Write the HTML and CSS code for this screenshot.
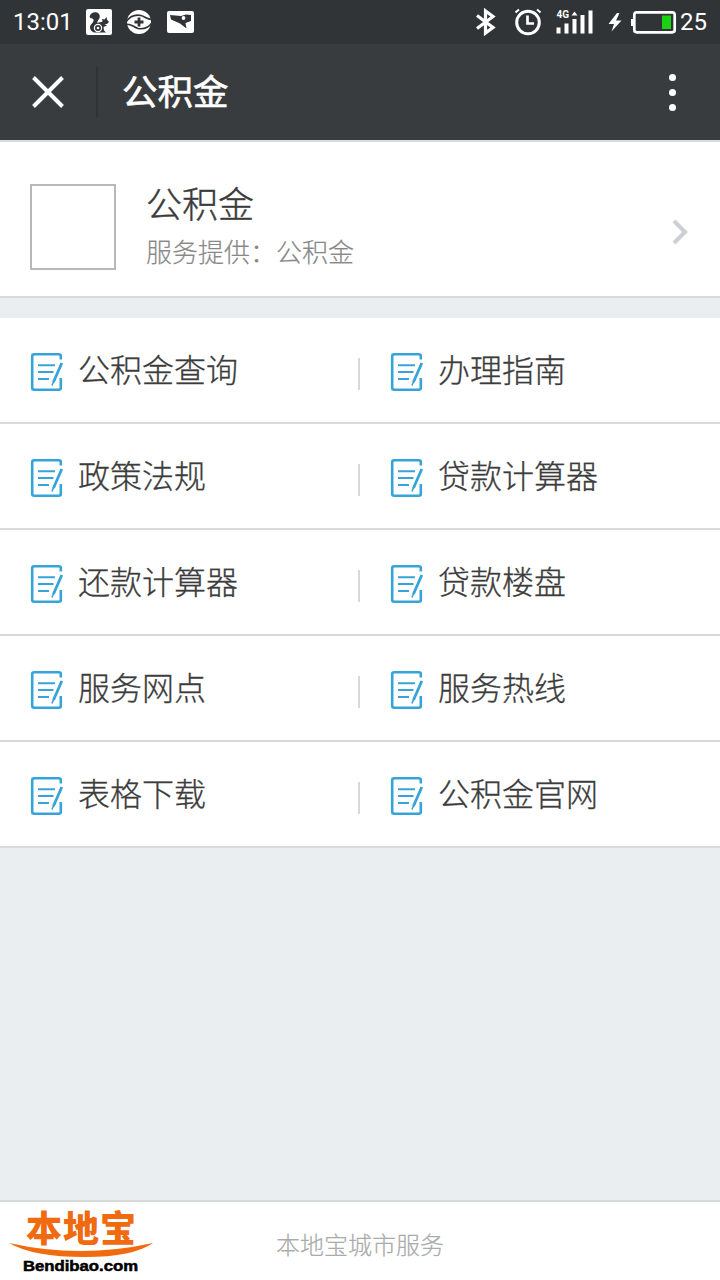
FILE: index.html
```html
<!DOCTYPE html>
<html lang="zh-CN">

<head>
    <meta charset="UTF-8">
    <meta name="viewport" content="width=device-width, initial-scale=1.0">
    <title>公积金</title>
    <link rel="stylesheet" href="styles.css">
</head>

<body>
    <!-- shared icon for the service list -->
    <svg class="sprite" width="0" height="0">
        <symbol id="icon-form" viewBox="0 0 34 40">
            <path d="M30.8 7.5V4.2Q30.8 2.2 28.8 2.2H4.2Q2.2 2.2 2.2 4.2V35.8Q2.2 37.8 4.2 37.8H28.8Q30.8 37.8 30.8 35.8V26" stroke-width="2.6" />
            <path d="M8 13.2H25M8 20H23.5M8 27H19" stroke-width="2" />
            <path d="M31.8 11L23.5 30" stroke-width="2.8" />
            <path d="M23.7 29L22 33.5" stroke-width="1.6" />
        </symbol>
    </svg>

    <div class="status-bar">
        <span class="time">13:01</span>
        <svg class="status-left" width="110" height="28" viewBox="0 0 110 28">
            <rect x="1" y="1" width="26" height="26" rx="2" fill="#fff" />
            <path d="M4.500 9C5 5 9 3.500 12 4.500C15 5.500 15.500 9 14 11C12.500 13 12 14 12.500 15C14 14 16 14.500 17.500 13.500L17 11L19.500 11.500L21.500 9L22 11.500L24 14L22 16H19.500L22 17.500L18.500 19L19 22.500L21 24.500H9C5 23 4 19 6 16.500C8 14.500 9.500 12.500 8 11C7 10 5.500 10.500 4.500 9Z" fill="#303436" />
            <circle cx="13" cy="20" r="3.600" fill="#303436" stroke="#fff" stroke-width="1.200" />
            <circle cx="13" cy="20" r="1.300" fill="#fff" />
            <circle cx="54" cy="14" r="12" fill="#fff" />
            <path d="M41 14C45 8 51 6.500 56 7.500C60 8.500 62 12 68 11.500M40 16.500C46 15 48 19 53 20.500C59 21.500 64 19 67 15" fill="none" stroke="#303436" stroke-width="1.700" />
            <path d="M54 9.500V18.500M49.500 14H58.500" stroke="#303436" stroke-width="2.800" />
            <rect x="82" y="3" width="27" height="22" rx="2" fill="#fff" />
            <path d="M85 7L96 8L101 6.500L106 7V13L100.500 15L101.500 20.500L95 15.500L86 11.500Z" fill="#303436" />
            <circle cx="98.500" cy="10" r="1.900" fill="#fff" />
        </svg>
        <svg class="status-right" width="206" height="30" viewBox="0 0 206 30">
            <path d="M4 8.500L20 20.500L12.500 26V4L20 9.500L4 21.500" fill="none" stroke="#fff" stroke-width="3.200" />
            <circle cx="55" cy="15.500" r="11.300" fill="none" stroke="#fff" stroke-width="3" />
            <path d="M54.500 8.500V16.500H61" fill="none" stroke="#fff" stroke-width="2.700" />
            <path d="M42.500 5.500L46 2.500M64 2.500L67.500 5.500" stroke="#fff" stroke-width="2" />
            <text class="network" x="83.500" y="11">4G</text>
            <path d="M85.500 26.500V20.500M93.500 26.500V16.500M101.500 26.500V12M109.500 26.500V8M117.500 26.500V3.500" stroke="#fff" stroke-width="4" />
            <path d="M98.500 8.500L101.500 4.500L104.500 8.500Z" fill="#fff" />
            <path d="M144 6L135.500 17H141L138.500 24.500L148.500 13.500H143L146.500 6Z" fill="#fff" />
            <rect x="161.300" y="5.300" width="40.400" height="20" rx="2.500" fill="none" stroke="#fff" stroke-width="2.700" />
            <path d="M159.500 12V19" stroke="#fff" stroke-width="3" />
            <rect x="189" y="8.500" width="9" height="13.500" fill="#1ad211" />
        </svg>
        <span class="battery">25</span>
    </div>

    <header class="nav-bar">
        <svg class="close" width="34" height="34" viewBox="0 0 34 34">
            <path d="M2.500 2.500L31.500 31.500M31.500 2.500L2.500 31.500" stroke="#fff" stroke-width="4" />
        </svg>
        <h1>公积金</h1>
        <div class="more"><i></i><i></i><i></i></div>
    </header>

    <section class="profile">
        <div class="avatar"></div>
        <div class="profile-text">
            <h2>公积金</h2>
            <p>服务提供：公积金</p>
        </div>
        <svg class="arrow" width="16" height="26" viewBox="0 0 16 26">
            <path d="M2 2L13 13L2 24" fill="none" stroke="#cfd0d4" stroke-width="4.200" />
        </svg>
    </section>

    <main class="services">
        <div class="service"><svg><use href="#icon-form" /></svg><span>公积金查询</span></div>
        <div class="service"><svg><use href="#icon-form" /></svg><span>办理指南</span></div>
        <div class="service"><svg><use href="#icon-form" /></svg><span>政策法规</span></div>
        <div class="service"><svg><use href="#icon-form" /></svg><span>贷款计算器</span></div>
        <div class="service"><svg><use href="#icon-form" /></svg><span>还款计算器</span></div>
        <div class="service"><svg><use href="#icon-form" /></svg><span>贷款楼盘</span></div>
        <div class="service"><svg><use href="#icon-form" /></svg><span>服务网点</span></div>
        <div class="service"><svg><use href="#icon-form" /></svg><span>服务热线</span></div>
        <div class="service"><svg><use href="#icon-form" /></svg><span>表格下载</span></div>
        <div class="service"><svg><use href="#icon-form" /></svg><span>公积金官网</span></div>
    </main>

    <footer class="footer">
        <svg class="logo" width="150" height="78" viewBox="0 0 150 78">
            <text class="logo-cn" x="18" y="40" textLength="110">本地宝</text>
            <path d="M1 41Q72 57 145 41Q125 55 77 55Q25 55 1 41Z" fill="#f06a10" />
            <text class="logo-en" x="15" y="69" textLength="115" lengthAdjust="spacingAndGlyphs">Bendibao.com</text>
        </svg>
        <p>本地宝城市服务</p>
    </footer>
</body>

</html>
```
FILE: styles.css
```css
* {
    box-sizing: border-box;
}

body {
    margin: 0;
    height: 1280px;
    display: flex;
    flex-direction: column;
    overflow: hidden;
    background-color: #eaeef1;
    font-family: "Noto Sans CJK SC", sans-serif;
    font-weight: 300;
    color: #3c3c3c;
}

h1,
h2,
p {
    margin: 0;
}

.sprite {
    position: absolute;
}

/* phone status bar */
.status-bar {
    height: 44px;
    display: flex;
    align-items: center;
    padding: 0 13px;
    background-color: #303436;
    color: #fff;
    font-family: Roboto, sans-serif;
    font-weight: 400;
    font-size: 24px;
}

.time {
    width: 60px;
}

.status-left {
    margin-left: 12px;
}

.status-right {
    margin-left: auto;
}

.battery {
    width: 27px;
    margin-left: 1px;
}

.network {
    font-family: Roboto, sans-serif;
    font-size: 10px;
    font-weight: 700;
    fill: #fff;
}

/* title bar */
.nav-bar {
    height: 96px;
    display: flex;
    align-items: center;
    padding: 0 44px 0 31px;
    background-color: #393c3e;
    color: #fff;
}

.nav-bar h1 {
    height: 50px;
    margin-left: 31px;
    padding-left: 24px;
    border-left: 2px solid #303335;
    font-size: 35.5px;
    font-weight: 400;
    line-height: 45px;
    -webkit-text-stroke: 0.6px;
}

.more {
    display: flex;
    flex-direction: column;
    gap: 8px;
    margin-left: auto;
}

.more i {
    width: 7px;
    height: 7px;
    border-radius: 50%;
    background-color: #fff;
}

.profile {
    height: 158px;
    display: flex;
    align-items: center;
    padding: 16px 32px 0 30px;
    border-top: 2px solid #d9dcdd;
    border-bottom: 2px solid #d9d9d9;
    background-color: #fff;
}

.avatar {
    width: 86px;
    height: 86px;
    border: 2px solid #b8b8b8;
}

.profile-text {
    margin-left: 30px;
    padding-bottom: 6px;
}

.profile-text h2 {
    font-size: 36px;
    font-weight: 300;
    line-height: 50px;
    -webkit-text-stroke: 0.4px;
}

.profile-text p {
    padding-top: 4px;
    color: #888;
    font-size: 26px;
    line-height: 40px;
    -webkit-text-stroke: 0.2px;
}

.arrow {
    margin-left: auto;
    margin-top: 10px;
}

/* service list, two per row */
.services {
    display: grid;
    grid-template-columns: 1fr 1fr;
    margin-top: 20px;
    background-color: #fff;
}

.service {
    height: 106px;
    display: flex;
    align-items: center;
    padding-left: 30px;
    border-bottom: 2px solid #d9d9d9;
    font-size: 32px;
    -webkit-text-stroke: 0.3px;
}

.service svg {
    width: 34px;
    height: 40px;
    margin-top: 4px;
    fill: none;
    stroke: #36a3d9;
}

.service span {
    margin-left: 14px;
    padding-bottom: 4px;
    line-height: 48px;
}

.service:nth-child(odd)::after {
    content: "";
    width: 2px;
    height: 32px;
    margin-left: auto;
    margin-top: 8px;
    background-color: #d9d9d9;
}

.footer {
    height: 80px;
    display: flex;
    align-items: center;
    margin-top: auto;
    padding-left: 8px;
    border-top: 2px solid #d6d9da;
    background-color: #fff;
}

.footer p {
    margin-left: 118px;
    padding-top: 5px;
    color: #aaa;
    font-size: 24px;
    -webkit-text-stroke: 0.2px;
}

.logo-cn {
    font-size: 36px;
    font-weight: 900;
    fill: #f06a10;
}

.logo-en {
    font-family: "Liberation Sans", sans-serif;
    font-size: 14px;
    font-weight: 700;
    fill: #000;
    stroke: #000;
    stroke-width: 0.5px;
}
```
